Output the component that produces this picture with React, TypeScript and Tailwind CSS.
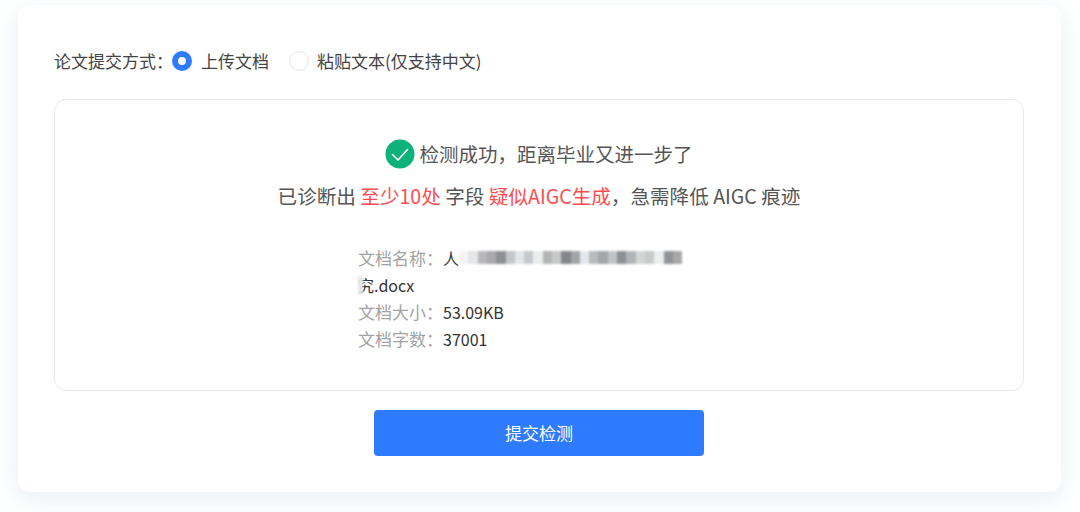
const fontStack = { fontFamily: '"Noto Sans CJK SC", "Noto Sans", sans-serif' }

const mosaicCells = [
  "bg-[#f4f4f4]", "bg-[#e4e6e7]", "bg-[#b8b8ba]", "bg-[#a9a9ab]", "bg-[#8f9094]", "bg-[#c3c6c8]",
  "bg-[#e2e6e8]", "bg-[#c6cacc]", "bg-[#eceded]", "bg-[#b4b5b7]", "bg-[#c8c8c8]", "bg-[#84868a]",
  "bg-[#a2a4a6]", "bg-[#e2e8ec]", "bg-[#b9babc]", "bg-[#a5a6a8]", "bg-[#c1c4c6]", "bg-[#8e9094]",
  "bg-[#b2b5b7]", "bg-[#d4d6d6]", "bg-[#c9cacb]", "bg-[#eceeee]", "bg-[#929396]", "bg-[#a8a8a8]",
]

const Radio = ({ checked }: { checked?: boolean }) =>
  checked ? (
    <span className="h-5 w-5 rounded-full border-[6px] border-[#2e7bff] bg-white" />
  ) : (
    <span className="h-5 w-5 rounded-full border border-[#e3e5e7] bg-white" />
  )

const DetailRow = ({ label, value }: { label: string; value: string }) => (
  <div className="flex h-[27px] items-center">
    <span className="w-[85px] shrink-0 text-[17px] text-[#a3a3a3]">{label}</span>
    <span>{value}</span>
  </div>
)

export default function App() {
  return (
    <div className="h-[512px] w-[1080px] overflow-hidden bg-white pt-[5px] pl-[18px]" style={fontStack}>
      <div className="flex h-[487px] w-[1043px] flex-col rounded-xl bg-white pt-[44px] pr-[37px] pl-9 shadow-[0_6px_24px_rgba(190,215,225,0.4)]">
        <div className="flex h-6 items-center text-[17px] text-[#444]">
          <span className="w-[118px] whitespace-nowrap">论文提交方式：</span>
          <Radio checked />
          <span className="ml-[9px] w-[88px]">上传文档</span>
          <Radio />
          <span className="ml-[8px]">粘贴文本(仅支持中文)</span>
        </div>

        <div className="mt-[26px] flex h-[292px] flex-col items-center rounded-xl border border-[#e8eaec] pt-[39px]">
          <div className="flex h-[30px] items-center gap-[4px] text-[19.5px] text-[#555]">
            <svg viewBox="0 0 30 30" className="h-[30px] w-[30px]">
              <circle cx="15" cy="15" r="14.5" fill="#0db27a" />
              <path d="M7.5 15.5 L13 21 L22.5 10.5" fill="none" stroke="#fff" strokeWidth="1.6" strokeLinecap="round" strokeLinejoin="round" />
            </svg>
            <span>检测成功，距离毕业又进一步了</span>
          </div>

          <div className="mt-3 text-[19.6px] leading-[30px] text-[#555]">
            已诊断出 <span className="text-[#ff4d4f]">至少10处</span> 字段{" "}
            <span className="text-[#ff4d4f]">疑似AIGC生成</span>，急需降低 AIGC 痕迹
          </div>

          <div className="mt-[33px] w-[372px] pl-[5px] text-[16px] text-[#333]">
            <div className="flex h-[27px] items-center">
              <span className="w-[85px] shrink-0 text-[17px] text-[#a3a3a3]">文档名称：</span>
              <span className="shrink-0">人</span>
              <div className="flex h-[13px] items-center blur-[1px]">
                {mosaicCells.map((cell, i) => (
                  <span key={i} className={`h-[13px] w-[9.3px] ${cell}`} />
                ))}
              </div>
            </div>
            <div className="flex h-[27px] items-center">
              <span className="-mr-[5px] h-[18px] w-[5px] bg-[#e6e6e6] blur-[1px]" />
              <span>究.docx</span>
            </div>
            <DetailRow label="文档大小：" value="53.09KB" />
            <DetailRow label="文档字数：" value="37001" />
          </div>
        </div>

        <button className="mx-auto mt-[19px] h-[46px] w-[330px] rounded bg-[#2e7bff] text-[17px] text-white">
          提交检测
        </button>
      </div>
    </div>
  )
}
